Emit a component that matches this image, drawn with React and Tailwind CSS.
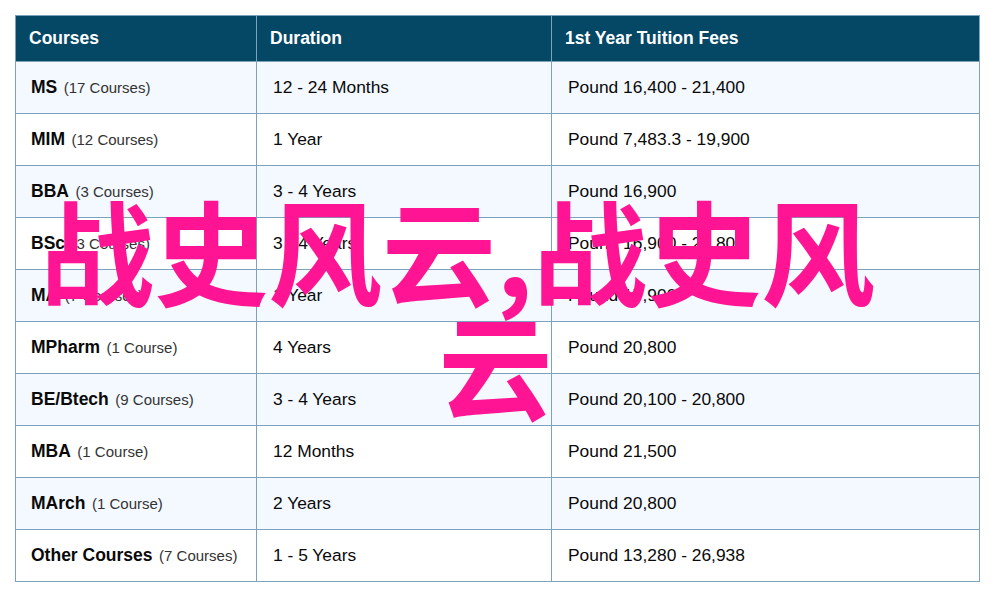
const rows = [
  ["MS", "(17 Courses)", "12 - 24 Months", "Pound 16,400 - 21,400"],
  ["MIM", "(12 Courses)", "1 Year", "Pound 7,483.3 - 19,900"],
  ["BBA", "(3 Courses)", "3 - 4 Years", "Pound 16,900"],
  ["BSc", "(3 Courses)", "3 - 4 Years", "Pound 16,900 - 20,800"],
  ["MA", "(7 Courses)", "1 Year", "Pound 17,900"],
  ["MPharm", "(1 Course)", "4 Years", "Pound 20,800"],
  ["BE/Btech", "(9 Courses)", "3 - 4 Years", "Pound 20,100 - 20,800"],
  ["MBA", "(1 Course)", "12 Months", "Pound 21,500"],
  ["MArch", "(1 Course)", "2 Years", "Pound 20,800"],
  ["Other Courses", "(7 Courses)", "1 - 5 Years", "Pound 13,280 - 26,938"],
];

export default function App() {
  return (
    <div className="relative w-[991px] h-[597px] bg-white overflow-hidden font-['Liberation_Sans',Arial,sans-serif]">
      <div className="p-[15px]">
        <table className="w-[965px] table-fixed border-collapse text-[17.4px] text-[#0a0a0a]">
          <thead>
            <tr className="h-[46px] bg-[#054866] text-white text-left text-[17.5px]">
              <th className="w-[241px] border border-[#7ba3bb] pl-[13px] font-bold">Courses</th>
              <th className="w-[295px] border border-[#7ba3bb] pl-[13px] font-bold">Duration</th>
              <th className="border border-[#7ba3bb] pl-[13px] font-bold">1st Year Tuition Fees</th>
            </tr>
          </thead>
          <tbody>
            {rows.map((row, i) => (
              <tr key={row[0]} className={i % 2 === 0 ? "h-[52px] bg-[#f3f9ff]" : "h-[52px] bg-white"}>
                <td className="border border-[#7ba3bb] pl-[15px]">
                  <span className="font-bold text-[17.5px]">{row[0]}</span>
                  <span className="ml-[6.5px] text-[15px] text-[#333333]">{row[1]}</span>
                </td>
                <td className="border border-[#7ba3bb] pl-[16px]">{row[2]}</td>
                <td className="border border-[#7ba3bb] pl-[16px]">{row[3]}</td>
              </tr>
            ))}
          </tbody>
        </table>
      </div>
      {/* overlay title */}
      <div className="absolute left-0 top-[191px] w-full text-[114px] leading-[114px] font-bold text-[#ff1493] font-['Noto_Sans_CJK_SC',sans-serif]">
        <div className="pl-[40px] whitespace-nowrap">战史风云,战史风</div>
        <div className="text-center">云</div>
      </div>
    </div>
  );
}
